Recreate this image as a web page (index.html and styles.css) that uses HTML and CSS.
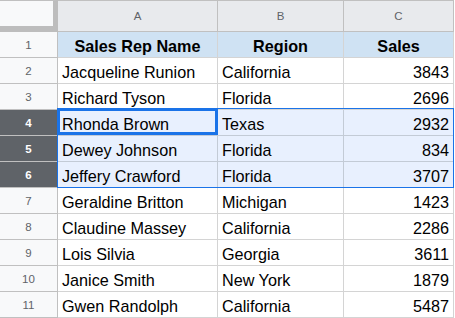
FILE: index.html
```html
<!DOCTYPE html>
<html>
<head>
<meta charset="utf-8">
<link rel="stylesheet" href="styles.css">
</head>
<body>
<div class="sheet">
  <div class="grid">
    <div class="corner"></div>
    <div class="colhead">A</div>
    <div class="colhead">B</div>
    <div class="colhead">C</div>

    <div class="rowhead">1</div>
    <div class="cell title">Sales Rep Name</div>
    <div class="cell title">Region</div>
    <div class="cell title">Sales</div>

    <div class="rowhead">2</div>
    <div class="cell">Jacqueline Runion</div>
    <div class="cell">California</div>
    <div class="cell num">3843</div>

    <div class="rowhead">3</div>
    <div class="cell">Richard Tyson</div>
    <div class="cell">Florida</div>
    <div class="cell num">2696</div>

    <div class="rowhead sel">4</div>
    <div class="cell selrow">Rhonda Brown</div>
    <div class="cell selrow">Texas</div>
    <div class="cell num selrow">2932</div>

    <div class="rowhead sel">5</div>
    <div class="cell selrow">Dewey Johnson</div>
    <div class="cell selrow">Florida</div>
    <div class="cell num selrow">834</div>

    <div class="rowhead sel">6</div>
    <div class="cell selrow">Jeffery Crawford</div>
    <div class="cell selrow">Florida</div>
    <div class="cell num selrow">3707</div>

    <div class="rowhead">7</div>
    <div class="cell">Geraldine Britton</div>
    <div class="cell">Michigan</div>
    <div class="cell num">1423</div>

    <div class="rowhead">8</div>
    <div class="cell">Claudine Massey</div>
    <div class="cell">California</div>
    <div class="cell num">2286</div>

    <div class="rowhead">9</div>
    <div class="cell">Lois Silvia</div>
    <div class="cell">Georgia</div>
    <div class="cell num">3611</div>

    <div class="rowhead">10</div>
    <div class="cell">Janice Smith</div>
    <div class="cell">New York</div>
    <div class="cell num">1879</div>

    <div class="rowhead">11</div>
    <div class="cell">Gwen Randolph</div>
    <div class="cell">California</div>
    <div class="cell num">5487</div>
  </div>
  <div class="selection"></div>
  <div class="active"></div>
</div>
</body>
</html>
```

FILE: styles.css
```css
html, body {
  margin: 0;
  padding: 0;
  background: #ffffff;
}

.sheet {
  position: relative;
  width: 455px;
  height: 318px;
  overflow: hidden;
  font-family: "Liberation Sans", Arial, sans-serif;
}

.grid {
  display: grid;
  grid-template-columns: 58px 160px 126px 110px;
  grid-template-rows: 32px repeat(11, 26px);
}

.grid > div {
  box-sizing: border-box;
  border-right: 1px solid #d4d4d4;
  border-bottom: 1px solid #d4d4d4;
}

.corner {
  background: #f8f9fa;
  border-top: 1px solid #c0c0c0;
  border-right: 5px solid #bdbdbd !important;
  border-bottom: 6px solid #bdbdbd !important;
}

.colhead {
  background: #e8eaed;
  border-top: 1px solid #c0c0c0;
  border-right-color: #c0c0c0 !important;
  border-bottom-color: #c0c0c0 !important;
  color: #5f6368;
  font-size: 11.5px;
  display: flex;
  align-items: center;
  justify-content: center;
}

.rowhead {
  background: #f8f9fa;
  border-right-color: #c0c0c0 !important;
  border-bottom-color: #c0c0c0 !important;
  color: #5f6368;
  font-size: 11.5px;
  display: flex;
  align-items: center;
  justify-content: center;
}

.rowhead.sel {
  background: #5f6368;
  color: #ffffff;
  font-weight: bold;
}

.cell {
  color: #000000;
  font-size: 16.2px;
  line-height: 18px;
  display: flex;
  align-items: flex-end;
  padding: 0 4px 2px 4px;
  white-space: nowrap;
  overflow: hidden;
}

.cell.title {
  background: #cfe2f3;
  font-weight: bold;
  justify-content: center;
}

.cell.num {
  justify-content: flex-end;
}

.cell.selrow {
  background: #e8f0fe;
  border-right-color: #c3cbd6;
  border-bottom-color: #c3cbd6;
}

.selection {
  position: absolute;
  left: 57px;
  top: 108px;
  width: 397px;
  height: 80px;
  box-sizing: border-box;
  border: 1px solid #1a73e8;
  pointer-events: none;
}

.active {
  position: absolute;
  left: 57px;
  top: 108px;
  width: 161px;
  height: 27px;
  box-sizing: border-box;
  border: 3px solid #1a73e8;
  pointer-events: none;
}
```
